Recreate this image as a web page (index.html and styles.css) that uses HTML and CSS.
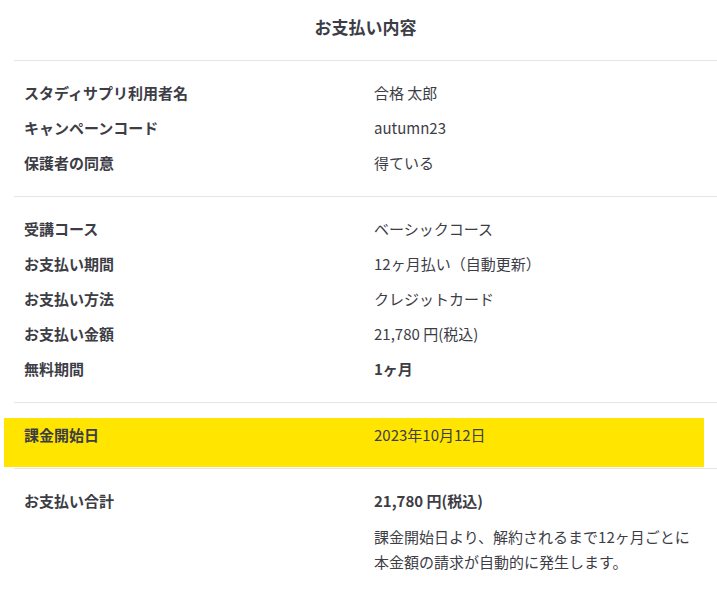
FILE: index.html
```html
<!DOCTYPE html>
<html lang="ja">
<head>
<meta charset="utf-8">
<title>お支払い内容</title>
<link rel="stylesheet" href="styles.css">
</head>
<body>
<main class="panel">
  <h1 class="title">お支払い内容</h1>

  <section class="group">
    <div class="row"><div class="label">スタディサプリ利用者名</div><div class="value">合格 太郎</div></div>
    <div class="row"><div class="label">キャンペーンコード</div><div class="value">autumn23</div></div>
    <div class="row"><div class="label">保護者の同意</div><div class="value">得ている</div></div>
  </section>

  <section class="group">
    <div class="row"><div class="label">受講コース</div><div class="value">ベーシックコース</div></div>
    <div class="row"><div class="label">お支払い期間</div><div class="value">12ヶ月払い（自動更新）</div></div>
    <div class="row"><div class="label">お支払い方法</div><div class="value">クレジットカード</div></div>
    <div class="row"><div class="label">お支払い金額</div><div class="value">21,780 円(税込)</div></div>
    <div class="row"><div class="label">無料期間</div><div class="value value--strong">1ヶ月</div></div>
  </section>

  <section class="group group--highlight">
    <div class="highlight">
      <div class="row row--highlight"><div class="label">課金開始日</div><div class="value">2023年10月12日</div></div>
    </div>
  </section>

  <section class="group group--total">
    <div class="row"><div class="label">お支払い合計</div><div class="value value--strong">21,780 円(税込)</div></div>
    <div class="row row--note"><div></div><p class="note">課金開始日より、解約されるまで12ヶ月ごとに<br>本金額の請求が自動的に発生します。</p></div>
  </section>
</main>
</body>
</html>
```

FILE: styles.css
```css
html, body {
  margin: 0;
  padding: 0;
  background: #ffffff;
}

body {
  font-family: "Noto Sans CJK JP", "Noto Sans", sans-serif;
  color: #3d3d46;
  overflow-x: hidden;
}

.panel {
  margin-left: 14px;
}

.title {
  margin: 0;
  padding: 15px 0 21px;
  font-size: 17px;
  line-height: 24px;
  font-weight: 700;
  text-align: center;
  border-bottom: 1px solid #e6e6e6;
}

.group {
  padding: 14px 0 16px;
  border-bottom: 1px solid #e6e6e6;
}

.row {
  display: grid;
  grid-template-columns: 350px 1fr;
  padding: 0 10px;
  font-size: 15px;
  line-height: 35px;
}

.label {
  font-weight: 700;
}

.value {
  font-weight: 400;
}

.value--strong {
  font-weight: 700;
}

.group--highlight {
  padding: 15px 0 1px;
}

.highlight {
  margin-left: -10px;
  width: 700px;
  background: #ffe500;
  padding-bottom: 15px;
}

.row--highlight {
  padding: 0 20px;
  line-height: 34px;
}

.group--total {
  border-bottom: none;
}

.row--note {
  line-height: 25px;
}

.note {
  margin: 6px 0 0;
  font-size: 15px;
  line-height: 25px;
}
```
